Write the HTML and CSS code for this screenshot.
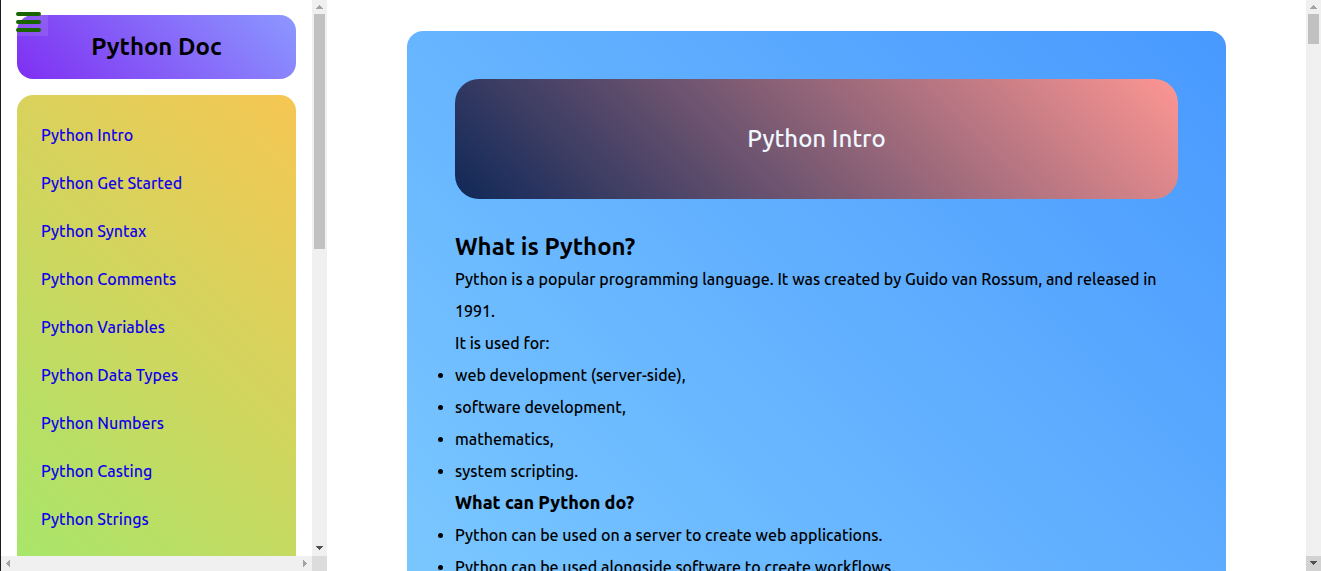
FILE: index.html
```html
<!DOCTYPE html>
<html lang="en">
<head>
<meta charset="utf-8">
<title>Python Doc</title>
<link rel="stylesheet" href="styles.css">
</head>
<body>
<aside class="sidebar">
  <button class="menu-button" type="button" aria-label="Toggle menu">
    <span class="menu-line"></span><span class="menu-line"></span><span class="menu-line"></span>
  </button>
  <div class="sidebar-content">
    <header class="brand"><h1 class="brand-title">Python Doc</h1></header>
    <nav class="topics">
      <a class="topic" href="#intro">Python Intro</a>
      <a class="topic" href="#start">Python Get Started</a>
      <a class="topic" href="#syntax">Python Syntax</a>
      <a class="topic" href="#comments">Python Comments</a>
      <a class="topic" href="#variables">Python Variables</a>
      <a class="topic" href="#types">Python Data Types</a>
      <a class="topic" href="#numbers">Python Numbers</a>
      <a class="topic" href="#casting">Python Casting</a>
      <a class="topic" href="#strings">Python Strings</a>
    </nav>
  </div>
  <div class="bar bar-vertical" aria-hidden="true">
    <svg class="arrow" viewBox="0 0 15 14"><path fill="#a3a3a3" d="M4 9v-1h1v-1h1v-1h1v-1h1v1h1v1h1v1h1v1z"/></svg>
    <div class="track"><div class="thumb thumb-sidebar"></div></div>
    <svg class="arrow" viewBox="0 0 15 14"><path fill="#505050" d="M4 4h7v1h-1v1h-1v1h-1v1h-1v-1h-1v-1h-1v-1h-1z"/></svg>
  </div>
  <div class="bar bar-horizontal" aria-hidden="true">
    <svg class="arrow" viewBox="0 0 15 15"><path fill="#a3a3a3" d="M9 4v7h-1v-1h-1v-1h-1v-1h-1v-1h1v-1h1v-1h1v-1z"/></svg>
    <svg class="arrow" viewBox="0 0 15 15"><path fill="#a3a3a3" d="M6 4v7h1v-1h1v-1h1v-1h1v-1h-1v-1h-1v-1h-1v-1z"/></svg>
  </div>
  <div class="corner"></div>
</aside>
<main class="page">
  <article class="card" id="intro">
    <header class="banner"><h2 class="banner-title">Python Intro</h2></header>
    <h2 class="heading">What is Python?</h2>
    <p class="text">Python is a popular programming language. It was created by Guido van Rossum, and released in 1991.</p>
    <p class="text">It is used for:</p>
    <ul class="list">
      <li>web development (server-side),</li>
      <li>software development,</li>
      <li>mathematics,</li>
      <li>system scripting.</li>
    </ul>
    <h3 class="subheading">What can Python do?</h3>
    <ul class="list">
      <li>Python can be used on a server to create web applications.</li>
      <li>Python can be used alongside software to create workflows.</li>
    </ul>
  </article>
</main>
<div class="bar bar-vertical" aria-hidden="true">
  <svg class="arrow" viewBox="0 0 15 14"><path fill="#a3a3a3" d="M4 9v-1h1v-1h1v-1h1v-1h1v1h1v1h1v1h1v1z"/></svg>
  <div class="track"><div class="thumb thumb-page"></div></div>
  <svg class="arrow arrow-pressed" viewBox="0 0 15 15"><path fill="#505050" d="M4 5h7v1h-1v1h-1v1h-1v1h-1v-1h-1v-1h-1v-1h-1z"/></svg>
</div>
</body>
</html>
```
FILE: styles.css
```css
* {
  box-sizing: border-box;
  margin: 0;
  padding: 0;
}

body {
  display: flex;
  height: 100vh;
  overflow: hidden;
  background: #fff;
  color: #000;
  font: 460 16px/32px Ubuntu, "Noto Sans", sans-serif;
}

.sidebar {
  position: relative;
  display: grid;
  grid-template: minmax(0, 1fr) 15px / minmax(0, 1fr) 15px;
  flex: 0 0 327px;
  border-left: 1px solid #1d1b20;
}

.sidebar-content {
  display: flex;
  flex-direction: column;
  gap: 16px;
  overflow: hidden;
  padding: 15px 16px 0;
}

.brand {
  flex: none;
  padding: 16px;
  border-radius: 16px;
  background: linear-gradient(45deg, #7f2ff2, #8c98ff);
  text-align: center;
}

.brand-title,
.heading {
  font-size: 24px;
  line-height: 32px;
}

.topics {
  display: flex;
  flex: 1 0 auto;
  flex-direction: column;
  gap: 16px;
  padding: 24px 24px 48px;
  border-radius: 16px;
  background: linear-gradient(225deg, #f6c653 0, #a8e66a 523px);
}

.topic {
  color: #1000ee;
  text-decoration: none;
}

.menu-button {
  position: absolute;
  top: 4px;
  left: 7px;
  display: flex;
  flex-direction: column;
  gap: 4px;
  width: 40px;
  padding: 8px 7px 4px 8px;
  border: 0;
  background: rgba(255, 255, 230, 0.1);
}

.menu-line {
  height: 4px;
  border-radius: 2px;
  background: #1a6400;
}

.bar {
  display: flex;
  background: #f0f0f0;
}

.bar-vertical {
  flex: 0 0 15px;
  flex-direction: column;
}

.bar-horizontal {
  justify-content: space-between;
}

.arrow {
  display: block;
  flex: none;
  width: 15px;
}

.arrow-pressed {
  background: #d2d2d2;
}

.track {
  flex: 1;
  padding: 0 2px;
}

.thumb {
  background: #c1c1c1;
}

.thumb-sidebar {
  height: 235px;
}

.thumb-page {
  height: 30px;
}

.corner {
  background: #dcdcdc;
}

.page {
  flex: 1;
  min-width: 0;
  overflow: hidden;
  padding: 31px 80px 0;
}

.card {
  padding: 48px;
  border-radius: 16px;
  background: linear-gradient(225deg, #4899ff 0, #7ac7ff 961px);
}

.banner {
  margin-bottom: 32px;
  padding: 44px 24px;
  border-radius: 24px;
  background: linear-gradient(45deg, #0f2858, #fd9693);
  color: #f0f8ff;
  text-align: center;
}

.banner-title {
  font-size: 24px;
  font-weight: 550;
  line-height: 32px;
}

.subheading {
  margin-bottom: 2px;
  font-size: 18px;
  font-weight: 800;
  line-height: 30px;
}
```
